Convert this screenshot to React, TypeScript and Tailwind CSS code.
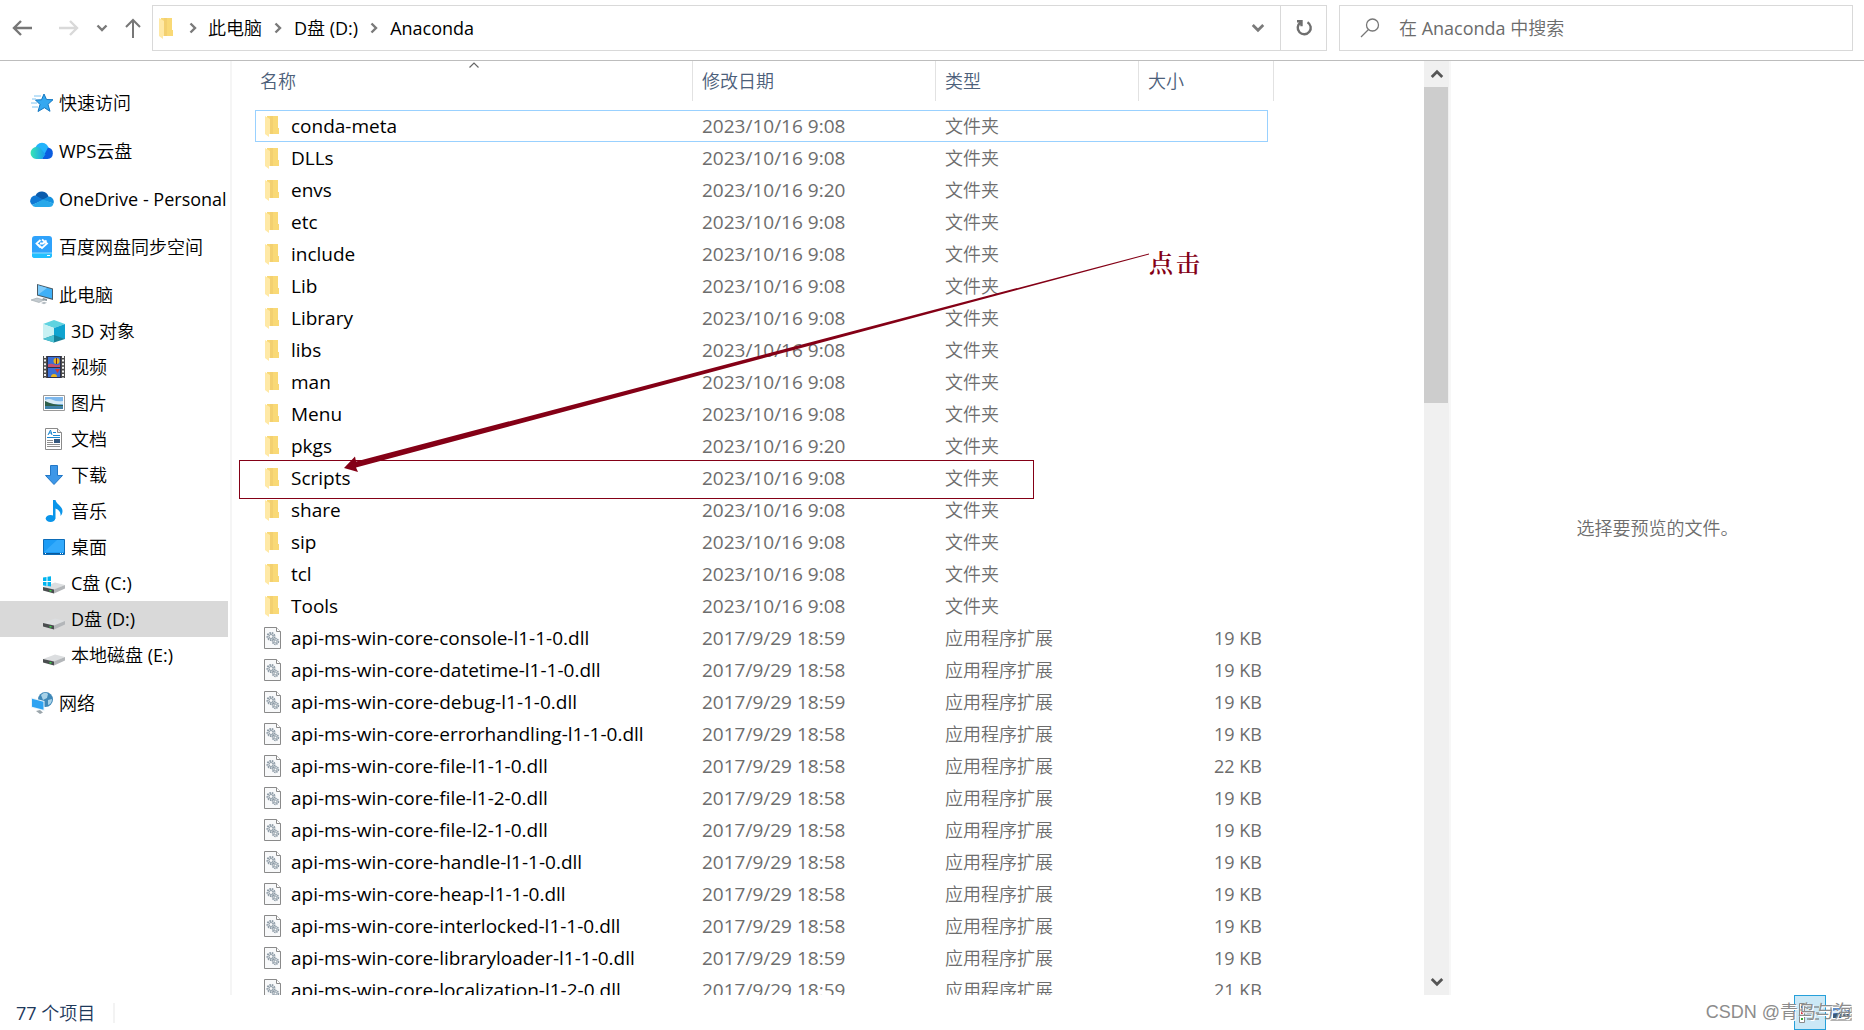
import React from 'react';

type Entry = { name: string; date: string; kind: 'folder' | 'dll'; size?: string };

const folder = (name: string, date = '2023/10/16 9:08'): Entry => ({ name, date, kind: 'folder' });
const dll = (name: string, date = '2017/9/29 18:58', size = '19 KB'): Entry => ({
  name: `api-ms-win-core-${name}.dll`,
  date,
  kind: 'dll',
  size,
});

const entries: Entry[] = [
  folder('conda-meta'),
  folder('DLLs'),
  folder('envs', '2023/10/16 9:20'),
  folder('etc'),
  folder('include'),
  folder('Lib'),
  folder('Library'),
  folder('libs'),
  folder('man'),
  folder('Menu'),
  folder('pkgs', '2023/10/16 9:20'),
  folder('Scripts'),
  folder('share'),
  folder('sip'),
  folder('tcl'),
  folder('Tools'),
  dll('console-l1-1-0', '2017/9/29 18:59'),
  dll('datetime-l1-1-0'),
  dll('debug-l1-1-0', '2017/9/29 18:59'),
  dll('errorhandling-l1-1-0'),
  dll('file-l1-1-0', '2017/9/29 18:58', '22 KB'),
  dll('file-l1-2-0'),
  dll('file-l2-1-0'),
  dll('handle-l1-1-0'),
  dll('heap-l1-1-0'),
  dll('interlocked-l1-1-0'),
  dll('libraryloader-l1-1-0', '2017/9/29 18:59'),
  dll('localization-l1-2-0', '2017/9/29 18:59', '21 KB'),
];

/* ---------- icons ---------- */

const Chevron: React.FC<{ d: string; className?: string; size?: number; width?: number }> = ({
  d,
  className = 'text-[#7a7a7a]',
  size = 12,
  width = 2.4,
}) => (
  <svg width={size} height={size} viewBox="0 0 12 12" fill="none" stroke="currentColor" strokeWidth={width} className={className}>
    <path d={d} />
  </svg>
);

const RIGHT = 'M3.5 1.5 8 6 3.5 10.5';
const DOWN = 'M1.5 3.5 6 8 10.5 3.5';
const UP = 'M1.5 8.5 6 4 10.5 8.5';

const FolderIcon = () => (
  <svg width="14" height="21" viewBox="0 0 14 21">
    <path d="M2 0h11v12h1v6H2z" fill="#f9d976" />
    <path d="M5 0h3v18H5z" fill="#f3d070" />
    <path d="M0 0 5 3v15H4v3L0 18z" fill="#ffe9a6" />
  </svg>
);

const DllIcon = () => (
  <svg width="17" height="22" viewBox="0 0 17 22">
    <path d="M.5.5h12l4 4v17H.5z" fill="#f8f9fa" stroke="#8a8a8a" />
    <path d="M12.500.5v4h4" fill="#fff" stroke="#8a8a8a" />
    <g fill="none" stroke="#8d9ba6">
      <circle cx="7" cy="9.500" r="3.500" strokeWidth="2" strokeDasharray="1.600 .8" />
      <circle cx="7" cy="9.500" r="2" />
      <circle cx="11.500" cy="14.500" r="2.800" strokeWidth="1.800" strokeDasharray="1.400 .7" />
      <circle cx="11.500" cy="14.500" r="1.300" />
    </g>
  </svg>
);

const StarIcon = () => (
  <svg width="24" height="24" viewBox="0 0 24 24">
    <path d="m14 3 2.500 5.500 6.500.2-5 4.600 2 7-5.600-3.600L8 20.500l2-7L5.500 9l6-.2z" fill="#35a8f0" stroke="#1478c2" />
    <path d="M4 5h7M2 8h4M1 12h6M2 16h6" stroke="#7fc4f2" />
  </svg>
);

const WpsIcon = () => (
  <svg width="24" height="24" viewBox="0 0 24 24">
    <defs>
      <linearGradient id="wps-a" x1="0" x2="1">
        <stop offset="0" stopColor="#38e6b4" />
        <stop offset="1" stopColor="#1798f2" />
      </linearGradient>
    </defs>
    <circle cx="12" cy="10.500" r="6.800" fill="#23b3fb" />
    <path d="M12 20 18 8.500a5.800 5.800 0 0 1-.5 11.500z" fill="#0b5de0" />
    <path d="M6.500 20a6 6 0 1 1 5-9.500l4 5L12 20z" fill="url(#wps-a)" />
  </svg>
);

const OneDriveIcon = () => (
  <svg width="24" height="24" viewBox="0 0 24 24">
    <path d="M5.500 8.500A7 7 0 0 1 18.500 9.500L13 15z" fill="#0a5cad" />
    <path d="M5.500 8.500A5.500 5.500 0 0 0 2 18l12-5z" fill="#0f78d4" />
    <path d="M18.500 9.500a5.300 5.300 0 0 1 5 7L12 13z" fill="#1490df" />
    <path d="M2 18 13 12.500 23.500 16.500A4.500 4.500 0 0 1 19 20H5.500A5 5 0 0 1 2 18z" fill="#28a8ea" />
  </svg>
);

const BaiduIcon = () => (
  <svg width="24" height="24" viewBox="0 0 24 24">
    <rect x="2" y="1" width="20" height="22" rx="3" fill="#2fa2fb" />
    <path d="M2 18h20v2a3 3 0 0 1-3 3H5a3 3 0 0 1-3-3z" fill="#22c0ff" />
    <path d="M2 18h20" stroke="#9adcff" />
    <path d="m10.500 5-4 3.500 4 4M10 8.500h3l3.500-3M12 4.500l5 4-5 4.500-3.500-3" stroke="#fff" strokeWidth="1.800" fill="none" />
    <path d="M17 20.500h3" stroke="#fff" />
  </svg>
);

const PcIcon = () => (
  <svg width="24" height="24" viewBox="0 0 24 24">
    <path d="m7 1 16 4.500V17L7 12.500z" fill="#4a5b66" />
    <path d="M8 2.300 22 6.200v9.400L8 11.700z" fill="#3fb0f7" />
    <path d="M8 2.300 17 5 8 11.700z" fill="#7fcbfa" />
    <path d="m13 15 4 1v2l-5-1z" fill="#8b979e" />
    <path d="m1 17 6-2 7 2-5 2.500z" fill="#c3cacf" stroke="#98a2a8" strokeWidth=".6" />
    <path d="m11 20 3-1.200 3 1-3 1.500z" fill="#b4bcc2" />
  </svg>
);

const CubeIcon = () => (
  <svg width="24" height="24" viewBox="0 0 24 24">
    <path d="m12 1 11 4-11 4L1 5z" fill="#5fd3e0" />
    <path d="m1 5 11 4v10L1 20z" fill="#c8f1f3" />
    <path d="m23 5-11 4v10l11 1z" fill="#0fa3cf" />
    <path d="m1 20 11-4 11 4-11 3.500z" fill="#15819a" />
    <path d="m1 20 11-4v7.500z" fill="#4cc3d4" />
  </svg>
);

const VideoIcon = () => (
  <svg width="24" height="24" viewBox="0 0 24 24">
    <path d="M1 1h22v22H1z" fill="#4a4a4a" />
    <path d="M5 1h14v22H5z" fill="#2a2f4a" />
    <path d="M6 2h12v10H6zM6 13h12v9H6z" fill="#3b6fd4" />
    <path d="M3 1v22M21 1v22" stroke="#f2f2f2" strokeWidth="2" strokeDasharray="2 1.600" />
    <path d="M6 9.500q3-1.500 6 0t6 0V12H6z" fill="#c9506e" />
    <circle cx="14.500" cy="6" r="3" fill="#e8b51e" />
    <path d="M14.500 3v6" stroke="#7a2a18" />
    <path d="m13 14 5 0-2.500 4z" fill="#d43a2a" />
    <path d="M9 22a3 3 0 0 1 6 0z" fill="#e8b51e" />
  </svg>
);

const ImageIcon = () => (
  <svg width="24" height="24" viewBox="0 0 24 24">
    <path d="M1.500 4.500h21v15h-21z" fill="#fff" stroke="#9a9a9a" />
    <path d="M3 6h18v12H3z" fill="#7db7ec" />
    <path d="M3 9q4-2 8 0t10 1v3H3z" fill="#d6eaf6" />
    <path d="M3 10q8 4 18 4v1H3z" fill="#2e5f4a" />
    <path d="M3 15h18v3H3z" fill="#3f81a8" />
  </svg>
);

const DocIcon = () => (
  <svg width="24" height="24" viewBox="0 0 24 24">
    <path d="M3.500 1.500h12l4 4v17h-16z" fill="#fff" stroke="#8a8a8a" />
    <path d="M15.500 1.500v4h4" fill="#eee" stroke="#8a8a8a" />
    <path d="m6 8 2.500-5L10 8M7 6h3M11 5.500h3M11 8.500h7M5 10.500h13" stroke="#1a86d0" fill="none" />
    <path d="M5 13.500h6M5 15.500h6M5 17.500h13M5 19.500h13" stroke="#8f8f8f" />
    <path d="M12 12h6v4h-6z" fill="#35587e" />
  </svg>
);

const DownloadIcon = () => (
  <svg width="24" height="24" viewBox="0 0 24 24">
    <path d="M8.500 2.500h7v10h5L12 21.500l-8.500-9h5z" fill="#3d97e8" stroke="#2278c8" />
  </svg>
);

const MusicIcon = () => (
  <svg width="24" height="24" viewBox="0 0 24 24">
    <ellipse cx="8.500" cy="19.500" rx="4.800" ry="3.500" fill="#0a95ea" />
    <path d="M11 1h2.500c.5 4 7 6 7 11 0 2-.8 4-2 5 .5-4-1.500-6-5-7.500V19.500H11z" fill="#0a95ea" />
  </svg>
);

const DesktopIcon = () => (
  <svg width="24" height="24" viewBox="0 0 24 24">
    <path d="M1.500 4.500h21v15h-21z" fill="#1c9cf6" stroke="#0c6cb8" />
    <path d="M2 17 15 5h7v12z" fill="#33aafc" />
    <path d="M2 18.500h20" stroke="#0a5a9c" />
    <path d="M3 18.500h1M18 18.500h1M20 18.500h1" stroke="#fff" />
  </svg>
);

const DriveIcon: React.FC<{ system?: boolean }> = ({ system }) => (
  <svg width="24" height="24" viewBox="0 0 24 24">
    <path d="m1 16 12-4.500 10 2.500-11 5z" fill="#dcdee0" />
    <path d="m1 16 11 2.500v4L1 19.500z" fill="#4a4d4f" />
    <path d="m12 18.500 11-4.500v3.500l-11 5z" fill="#b3b6b9" />
    <path d="M7.500 19h2v1.500h-2z" fill="#39d04a" />
    {system && <path d="M1 6.500 4.500 6v4H1zM5.500 5.800 9 5.300V10H5.500zM1 11h3.500v4L1 14.500zM5.500 11H9v4.500L5.500 15z" fill="#00b4ef" />}
  </svg>
);

const NetworkIcon = () => (
  <svg width="24" height="24" viewBox="0 0 24 24">
    <circle cx="15.500" cy="8.500" r="7.500" fill="#3f88b8" />
    <path d="M11 4q4-4 7-1l-1 4-4 2zM18 9l4-1q0 5-4 6z" fill="#a8d2e8" />
    <path d="m1 6.500 13.500 3.500v10L1 16.500z" fill="#e8f4fb" />
    <path d="m2 7.800 11.500 3v8L2 15.700z" fill="#2ea3f2" />
    <path d="m6 20 4-1 3 2.500-3 1.500z" fill="#9aa5ab" />
  </svg>
);

/* ---------- navigation pane ---------- */

type NavItem = { label: string; icon: React.ReactNode; children?: NavItem[]; selected?: boolean };

const nav: NavItem[] = [
  { label: '快速访问', icon: <StarIcon /> },
  { label: 'WPS云盘', icon: <WpsIcon /> },
  { label: 'OneDrive - Personal', icon: <OneDriveIcon /> },
  { label: '百度网盘同步空间', icon: <BaiduIcon /> },
  {
    label: '此电脑',
    icon: <PcIcon />,
    children: [
      { label: '3D 对象', icon: <CubeIcon /> },
      { label: '视频', icon: <VideoIcon /> },
      { label: '图片', icon: <ImageIcon /> },
      { label: '文档', icon: <DocIcon /> },
      { label: '下载', icon: <DownloadIcon /> },
      { label: '音乐', icon: <MusicIcon /> },
      { label: '桌面', icon: <DesktopIcon /> },
      { label: 'C盘 (C:)', icon: <DriveIcon system /> },
      { label: 'D盘 (D:)', icon: <DriveIcon />, selected: true },
      { label: '本地磁盘 (E:)', icon: <DriveIcon /> },
    ],
  },
  { label: '网络', icon: <NetworkIcon /> },
];

const NavRow: React.FC<{ item: NavItem; nested?: boolean }> = ({ item, nested }) => (
  <a
    href="#"
    aria-current={item.selected ? 'page' : undefined}
    className={`flex h-9 items-center gap-[5px] overflow-hidden whitespace-nowrap ${nested ? 'pl-[42px]' : 'pl-[30px]'} ${
      item.selected ? 'bg-[#d9d9d9]' : ''
    }`}
  >
    <span className="shrink-0">{item.icon}</span>
    <span>{item.label}</span>
  </a>
);

const Sidebar = () => (
  <nav className="w-[228px] shrink-0 overflow-hidden pt-6">
    <ul className="flex flex-col gap-3">
      {nav.map((item) => (
        <li key={item.label}>
          <NavRow item={item} />
          {item.children && (
            <ul>
              {item.children.map((child) => (
                <li key={child.label}>
                  <NavRow item={child} nested />
                </li>
              ))}
            </ul>
          )}
        </li>
      ))}
    </ul>
  </nav>
);

/* ---------- toolbar ---------- */

const Toolbar = () => (
  <header className="flex h-[61px] shrink-0 items-start border-b border-[#bdbdbd] pt-[5px] pr-[11px]">
    <div className="flex h-[46px] w-[152px] shrink-0 items-center pl-3 text-[#777]">
      <button aria-label="后退" className="mr-6">
        <svg width="22" height="20" viewBox="0 0 22 20" fill="none" stroke="currentColor" strokeWidth="2.400">
          <path d="M20 10H2M9 3 2 10l7 7" />
        </svg>
      </button>
      <button aria-label="前进" className="mr-4 text-[#d9d9d9]">
        <svg width="22" height="20" viewBox="0 0 22 20" fill="none" stroke="currentColor" strokeWidth="2.400">
          <path d="M1 10h18M12 3l7 7-7 7" />
        </svg>
      </button>
      <button aria-label="最近浏览的位置" className="mr-4">
        <Chevron d={DOWN} size={12} />
      </button>
      <button aria-label="上移">
        <svg width="18" height="22" viewBox="0 0 18 22" fill="none" stroke="currentColor" strokeWidth="2">
          <path d="M9 21V3M2 10l7-7 7 7" />
        </svg>
      </button>
    </div>

    <div className="flex h-[46px] min-w-0 flex-1 items-stretch border border-[#d9d9d9]">
      <div className="flex flex-1 items-center pl-[6px]">
        <FolderIcon />
        {['此电脑', 'D盘 (D:)', 'Anaconda'].map((part, i) => (
          <React.Fragment key={part}>
            <Chevron d={RIGHT} className={i === 0 ? 'mr-[9px] ml-[14px] text-[#7a7a7a]' : 'mx-[10px] text-[#7a7a7a]'} />
            <a href="#">{part}</a>
          </React.Fragment>
        ))}
      </div>
      <button aria-label="以前的位置" className="flex w-[44px] items-center justify-center">
        <Chevron d={DOWN} size={14} />
      </button>
      <button aria-label="刷新" className="flex w-[46px] items-center justify-center border-l border-[#d9d9d9] text-[#6f6f6f]">
        <svg width="18" height="18" viewBox="0 0 18 18" fill="none" stroke="currentColor" strokeWidth="2.400">
          <path d="M12.500 3.200a6.500 6.500 0 1 1-7 .3M2 2.300h4.500v5" />
        </svg>
      </button>
    </div>

    <label className="ml-3 flex h-[46px] w-[514px] shrink-0 items-center border border-[#d9d9d9] pl-5">
      <svg width="20" height="20" viewBox="0 0 20 20" fill="none" stroke="#777" strokeWidth="1.300">
        <circle cx="12.500" cy="7" r="6" />
        <path d="m8.500 11.500-7.500 7.500" />
      </svg>
      <input
        aria-label="搜索"
        placeholder="在 Anaconda 中搜索"
        className="ml-[19px] min-w-0 flex-1 bg-transparent outline-none placeholder:text-[#6b6b6b]"
      />
    </label>
  </header>
);

/* ---------- file list ---------- */

const HeadCell: React.FC<{ label: string; sorted?: boolean; className?: string }> = ({ label, sorted, className = 'pl-[9px]' }) => (
  <th scope="col" className="h-[49px] p-0 text-left align-top font-normal text-[#4c607a]">
    <button className={`relative flex h-10 w-full items-center border-r border-[#e2e2e2] ${className}`}>
      {label}
      {sorted && <Chevron d={UP} width={1.2} className="absolute top-[-2px] left-1/2 -translate-x-1/2 text-[#666]" />}
    </button>
  </th>
);

const FileTable = () => (
  <table className="w-[1019px] table-fixed border-collapse whitespace-nowrap">
    <colgroup>
      <col className="w-[438px]" />
      <col className="w-[243px]" />
      <col className="w-[203px]" />
      <col className="w-[135px]" />
    </colgroup>
    <thead>
      <tr>
        <HeadCell label="名称" sorted className="pl-[5px]" />
        <HeadCell label="修改日期" />
        <HeadCell label="类型" />
        <HeadCell label="大小" />
      </tr>
    </thead>
    <tbody className="text-[#6d6d6d]">
      {entries.map((entry, i) => (
        <tr key={entry.name} className="relative h-8">
          <td className="p-0 text-[19px] text-black">
            <div className="flex h-8 items-center">
              <span className="flex w-9 shrink-0 justify-center pr-[2px]">{entry.kind === 'folder' ? <FolderIcon /> : <DllIcon />}</span>
              {entry.name}
            </div>
            {i === 0 && <span className="absolute inset-y-0 right-[6px] left-0 border border-[#99d1ff]" />}
          </td>
          <td className="p-0 pl-[9px] text-[19px]">{entry.date}</td>
          <td className="p-0 pl-[9px]">{entry.kind === 'folder' ? '文件夹' : '应用程序扩展'}</td>
          <td className="p-0 pr-3 text-right">{entry.size}</td>
        </tr>
      ))}
    </tbody>
  </table>
);

// Hand-drawn callout pointing at the Scripts row
const Annotation = () => (
  <div className="pointer-events-none absolute inset-0 text-[#840016]">
    <div className="absolute top-[399px] left-[7px] h-[39px] w-[795px] border border-[#840016]" />
    <svg width="930" height="430" viewBox="0 0 930 430" fill="currentColor" className="absolute top-0 left-0">
      <path d="M917 192.500 124 400.500l-1-5L112 407l14 4-2-4.500L917 193.500z" />
    </svg>
    <span className="absolute top-[185px] left-[917px] flex gap-[3px] font-['Noto_Serif_CJK_SC','Noto_Sans_CJK_SC',serif] text-2xl font-semibold">
      <span>点</span>
      <span>击</span>
    </span>
  </div>
);

const ScrollBar = () => (
  <div className="flex w-[25px] shrink-0 flex-col bg-[#f0f0f0]">
    <button aria-label="向上滚动" className="flex h-[26px] items-center justify-center">
      <Chevron d={UP} size={14} className="text-[#555]" />
    </button>
    <div className="h-[316px] w-6 bg-[#cdcdcd]" />
    <div className="flex-1" />
    <button aria-label="向下滚动" className="flex h-[26px] items-center justify-center">
      <Chevron d={DOWN} size={14} className="text-[#555]" />
    </button>
  </div>
);

const StatusBar = () => (
  <footer className="relative flex h-[35px] shrink-0 items-center bg-white pl-4 text-[#1e395b]">
    <span>77 个项目</span>
    <span className="ml-[18px] h-5 border-l-2 border-[#f3f3f3]" />
    <div className="ml-auto flex h-full items-center gap-1 pr-3">
      <button aria-label="详细信息" className="flex h-full w-8 items-center justify-center border border-[#26a0da] bg-[#cbe8f6]">
        <svg width="22" height="22" viewBox="0 0 22 22">
          <path d="M.5 1.500h5v19h-5zM.5 8h5M.5 14h5" fill="#fff" stroke="#8a8a8a" />
          <path d="M2 4h2v2H2z" fill="#444" />
          <path d="M2 10h2v2H2z" fill="#d33" />
          <path d="M2 16h2v2H2z" fill="#3a3" />
          <path d="M8 5h5M15 5h5M8 11h5M15 11h5M8 17h5M15 17h5" stroke="#666" />
        </svg>
      </button>
      <button aria-label="大缩略图">
        <svg width="22" height="16" viewBox="0 0 22 16">
          <path d="M1 1h20v14H1z" fill="#fff" stroke="#9a9a9a" strokeWidth="1.500" />
          <path d="M3 3h16v10H3z" fill="#5a8fd8" />
          <path d="M3 6q6-3 16 1v1H3z" fill="#dcebf8" />
          <path d="M3 9q8-2 16 0v4H3z" fill="#39597a" />
        </svg>
      </button>
    </div>
    <span className="pointer-events-none absolute right-3 bottom-1 font-['Liberation_Sans','Noto_Sans_CJK_SC',sans-serif] text-[#8c8c8c] [text-shadow:1px_1px_0_white]">
      CSDN @青鸟与海
    </span>
  </footer>
);

const App: React.FC = () => (
  <div className="flex h-screen flex-col overflow-hidden bg-white font-['Open_Sans','Noto_Sans_CJK_SC_DemiLight','Noto_Sans_CJK_SC',sans-serif] text-lg leading-7 text-black">
    <Toolbar />
    <div className="flex min-h-0 flex-1">
      <Sidebar />
      <main className="relative ml-[2px] min-w-0 flex-1 overflow-hidden border-l-2 border-[#f5f5f5] pl-[23px]">
        <FileTable />
        <Annotation />
      </main>
      <ScrollBar />
      <aside className="flex w-[415px] shrink-0 items-center justify-center border-l-2 border-[#f7f7f7] text-[#6d6d6d]">
        选择要预览的文件。
      </aside>
    </div>
    <StatusBar />
  </div>
);

export default App;
